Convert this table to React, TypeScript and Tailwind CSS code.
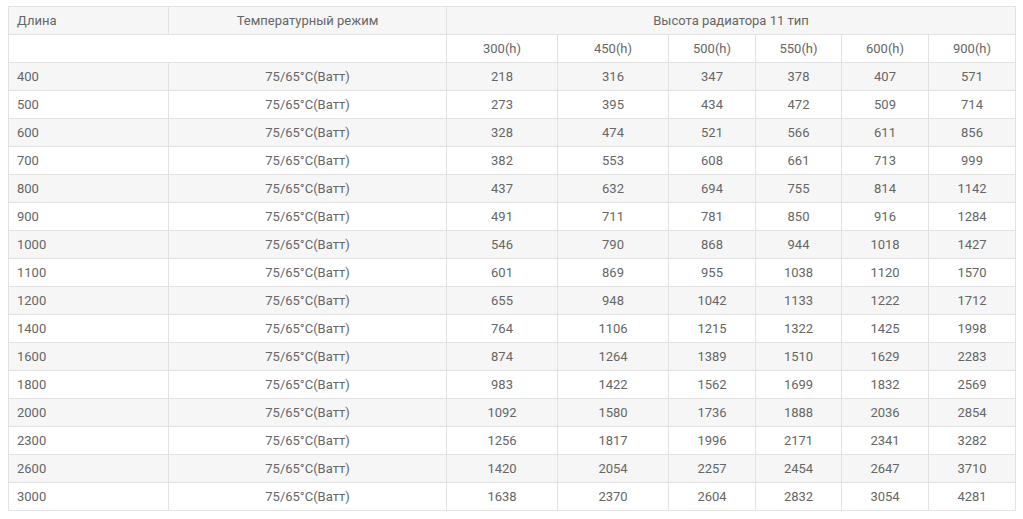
import React from "react";

const lengths = [400, 500, 600, 700, 800, 900, 1000, 1100, 1200, 1400, 1600, 1800, 2000, 2300, 2600, 3000];
const data: number[][] = [
  [218, 316, 347, 378, 407, 571],
  [273, 395, 434, 472, 509, 714],
  [328, 474, 521, 566, 611, 856],
  [382, 553, 608, 661, 713, 999],
  [437, 632, 694, 755, 814, 1142],
  [491, 711, 781, 850, 916, 1284],
  [546, 790, 868, 944, 1018, 1427],
  [601, 869, 955, 1038, 1120, 1570],
  [655, 948, 1042, 1133, 1222, 1712],
  [764, 1106, 1215, 1322, 1425, 1998],
  [874, 1264, 1389, 1510, 1629, 2283],
  [983, 1422, 1562, 1699, 1832, 2569],
  [1092, 1580, 1736, 1888, 2036, 2854],
  [1256, 1817, 1996, 2171, 2341, 3282],
  [1420, 2054, 2257, 2454, 2647, 3710],
  [1638, 2370, 2604, 2832, 3054, 4281],
];
const heights = ["300(h)", "450(h)", "500(h)", "550(h)", "600(h)", "900(h)"];

export default function App() {
  return (
    <div
      className="bg-white px-2 pt-[6px] text-[13px] text-[#666]"
      style={{ fontFamily: "Roboto, 'Liberation Sans', sans-serif" }}
    >
      <table className="w-full table-fixed border-collapse">
        <colgroup>
          <col className="w-[160px]" />
          <col className="w-[278px]" />
          <col className="w-[111px]" />
          <col className="w-[111px]" />
          <col className="w-[87px]" />
          <col className="w-[86px]" />
          <col className="w-[87px]" />
          <col className="w-[87px]" />
        </colgroup>
        <tbody>
          <tr className="h-[28px] bg-[#f6f6f6]">
            <td className="border border-[#e2e2e2] px-2 text-left font-normal">Длина</td>
            <td className="border border-[#e2e2e2] px-2 text-center font-normal">Температурный режим</td>
            <td colSpan={6} className="border border-[#e2e2e2] px-2 text-center font-normal">
              Высота радиатора 11 тип
            </td>
          </tr>
          <tr className="h-[28px] bg-white">
            <td colSpan={2} className="border border-[#e2e2e2] px-2"></td>
            {heights.map((h) => (
              <td key={h} className="border border-[#e2e2e2] px-1 text-center">
                {h}
              </td>
            ))}
          </tr>
          {lengths.map((len, i) => (
            <tr key={len} className={`h-[28px] ${i % 2 === 0 ? "bg-[#f6f6f6]" : "bg-white"}`}>
              <td className="border border-[#e2e2e2] px-2 text-left">{len}</td>
              <td className="border border-[#e2e2e2] px-2 text-center">75/65°C(Ватт)</td>
              {data[i].map((v, j) => (
                <td key={j} className="border border-[#e2e2e2] px-1 text-center">
                  {v}
                </td>
              ))}
            </tr>
          ))}
        </tbody>
      </table>
    </div>
  );
}
